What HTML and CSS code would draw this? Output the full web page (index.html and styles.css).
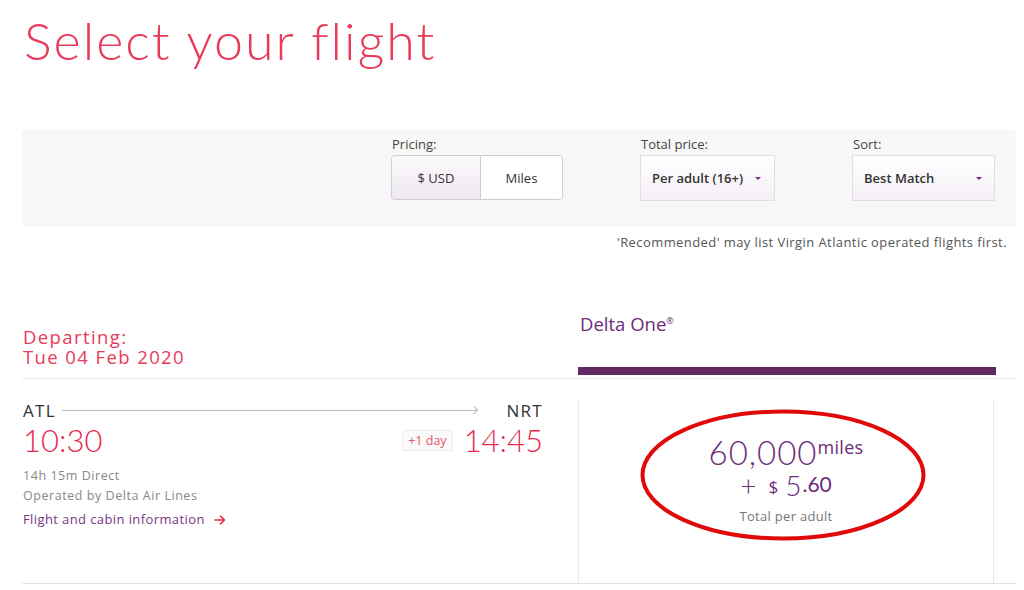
FILE: index.html
```html
<!DOCTYPE html>
<html lang="en">

<head>
    <meta charset="UTF-8">
    <title>Select your flight</title>
    <link rel="stylesheet" href="styles.css">
</head>

<body>
    <div class="page">
        <h1 class="page-title">Select your flight</h1>

        <div class="filters">
            <div class="filter">
                <label>Pricing:</label>
                <div class="toggle">
                    <button class="toggle-btn active">$ USD</button>
                    <button class="toggle-btn">Miles</button>
                </div>
            </div>
            <div class="filter">
                <label>Total price:</label>
                <div class="select select-price">Per adult (16+)<span class="caret"></span></div>
            </div>
            <div class="filter">
                <label>Sort:</label>
                <div class="select select-sort">Best Match<span class="caret"></span></div>
            </div>
        </div>
        <p class="note">'Recommended' may list Virgin Atlantic operated flights first.</p>

        <div class="flight-head">
            <div class="departing">
                <div>Departing:</div>
                <div>Tue 04 Feb 2020</div>
            </div>
            <div class="cabin-head">
                <div class="cabin-name">Delta One<sup>&reg;</sup></div>
                <div class="cabin-bar"></div>
            </div>
        </div>

        <div class="flight-row">
            <div class="flight-info">
                <div class="route">
                    <span class="airport">ATL</span>
                    <span class="route-line"></span>
                    <span class="airport">NRT</span>
                </div>
                <div class="times">
                    <span class="time">10:30</span>
                    <span class="spacer"></span>
                    <span class="plus-day">+1 day</span>
                    <span class="time">14:45</span>
                </div>
                <p class="meta">14h 15m Direct</p>
                <p class="meta">Operated by Delta Air Lines</p>
                <a class="info-link" href="#">Flight and cabin information
                    <svg class="arrow" width="12" height="10" viewBox="0 0 12 10">
                        <path d="M1 5H10.5M6.5 1L10.5 5L6.5 9" fill="none" stroke="#e5294f" stroke-width="1.6" stroke-linecap="round" stroke-linejoin="round"/>
                    </svg>
                </a>
            </div>
            <div class="fare">
                <div class="fare-miles">60,000<span class="miles-unit">miles</span></div>
                <div class="fare-cash"><span class="cash-plus">+</span><span class="cash-sign">$</span><span class="cash-big">5</span><span class="cash-cents">.60</span></div>
                <div class="fare-note">Total per adult</div>
                <svg class="circle-mark" width="286" height="132" viewBox="0 0 286 132">
                    <ellipse cx="143" cy="66" rx="140.5" ry="63.5" fill="none" stroke="#e00a0a" stroke-width="4"/>
                </svg>
            </div>
        </div>
    </div>
</body>

</html>
```

FILE: styles.css
```css
body {
    margin: 0;
    font-family: 'Open Sans', 'Liberation Sans', sans-serif;
    color: #333;
    background-color: #fff;
}

.page {
    width: 994px;
    padding-left: 22px;
}

.page-title {
    margin: 10px 0 0 2px;
    font-family: 'Lato', sans-serif;
    font-weight: 300;
    font-size: 52px;
    line-height: 60px;
    color: #e83a5a;
    letter-spacing: 2px;
}

/* filter panel */
.filters {
    margin-top: 60px;
    background-color: #f7f7f7;
    border-radius: 4px;
    display: flex;
    justify-content: flex-end;
    gap: 77px;
    padding: 6px 21px 26px 0;
}

.filter label {
    display: block;
    font-size: 13px;
    line-height: 16px;
    color: #444;
    margin-bottom: 3px;
    padding-left: 1px;
}

.toggle {
    display: flex;
    border: 1px solid #d3cad5;
    border-radius: 4px;
    overflow: hidden;
    height: 43px;
}

.toggle-btn {
    border: none;
    background: #fff;
    font-family: inherit;
    font-size: 13px;
    color: #333;
    width: 81px;
    padding: 0;
}

.toggle-btn.active {
    width: 89px;
    border-right: 1px solid #d3cad5;
    background: linear-gradient(#fbf9fb, #efe8f1);
}

.select {
    display: flex;
    align-items: center;
    height: 44px;
    padding-left: 11px;
    border: 1px solid #e2dee3;
    background: linear-gradient(#fff, #f4eff5);
    font-size: 13px;
    font-weight: 600;
    color: #333;
    position: relative;
    box-sizing: content-box;
}

.select-price {
    width: 122px;
}

.select-sort {
    width: 130px;
}

.caret {
    position: absolute;
    top: 21px;
    border-left: 3px solid transparent;
    border-right: 3px solid transparent;
    border-top: 3px solid #7a2a85;
}

.select-price .caret {
    right: 13px;
}

.select-sort .caret {
    right: 12px;
}

.note {
    margin: 7px 9px 0 0;
    text-align: right;
    font-size: 13px;
    letter-spacing: 0.42px;
    color: #555;
    line-height: 16px;
}

/* flight header */
.flight-head {
    margin-top: 60px;
    display: flex;
    align-items: flex-end;
    border-bottom: 1px solid #e8e8e8;
}

.departing {
    width: 555px;
    padding-left: 1px;
    font-size: 18.5px;
    letter-spacing: 1.4px;
    line-height: 19.5px;
    color: #e83a5a;
    padding-bottom: 12px;
}

.cabin-head {
    width: 418px;
}

.cabin-name {
    font-size: 18.5px;
    line-height: 22px;
    color: #6b2c78;
    padding-left: 2px;
}

.cabin-name sup {
    font-size: 9px;
}

.cabin-bar {
    margin-top: 32px;
    height: 8px;
    background-color: #632862;
    margin-bottom: 3px;
}

/* flight row */
.flight-row {
    display: flex;
    border-bottom: 1px solid #e4e4e4;
    height: 204px;
}

.flight-info {
    width: 521px;
    padding-top: 21px;
    margin-right: 35px;
}

.route {
    display: flex;
    align-items: center;
    height: 20px;
}

.airport {
    font-size: 17px;
    letter-spacing: 1.3px;
    color: #333;
    padding-left: 1px;
}

.route-line {
    flex: 1;
    height: 1px;
    background-color: #bbb;
    margin: 0 28px 0 6px;
    position: relative;
}

.route-line::after {
    content: "";
    position: absolute;
    right: 0;
    top: -3px;
    width: 5px;
    height: 5px;
    border-top: 1px solid #bbb;
    border-right: 1px solid #bbb;
    transform: rotate(45deg);
}

.times {
    display: flex;
    align-items: center;
    height: 36px;
    margin-top: 2px;
}

.time {
    font-family: 'Lato', sans-serif;
    font-weight: 300;
    font-size: 31px;
    color: #e5294f;
    padding-left: 1px;
}

.spacer {
    flex: 1;
}

.plus-day {
    font-size: 12.5px;
    color: #e5546e;
    border: 1px solid #ececec;
    background-color: #fafafa;
    border-radius: 2px;
    padding: 1px 5px;
    margin-right: 10px;
    line-height: 17px;
}

.meta {
    margin: 0;
    padding-left: 1px;
    font-size: 12.5px;
    letter-spacing: 0.55px;
    line-height: 19.5px;
    color: #888;
}

.times + .meta {
    margin-top: 8px;
}

.info-link {
    display: inline-block;
    margin-top: 5px;
    padding-left: 1px;
    font-size: 13px;
    letter-spacing: 0.4px;
    color: #7a3486;
    text-decoration: none;
}

.arrow {
    margin-left: 5px;
    vertical-align: -1px;
}

.fare {
    position: relative;
    width: 416px;
    margin-top: 21px;
    border-left: 1px solid #e8e8e8;
    border-right: 1px solid #e8e8e8;
    text-align: center;
    color: #6b2c78;
    padding-top: 36px;
    box-sizing: border-box;
    height: 183px;
}

.fare-miles {
    font-family: 'Lato', sans-serif;
    font-weight: 300;
    font-size: 33px;
    letter-spacing: 1px;
    line-height: 32px;
}

.miles-unit {
    font-family: 'Open Sans', sans-serif;
    font-weight: 400;
    font-size: 18px;
    letter-spacing: 0.3px;
    vertical-align: 11px;
    line-height: 18px;
}

.fare-cash {
    display: flex;
    justify-content: center;
    align-items: baseline;
    font-family: 'Lato', sans-serif;
    line-height: 22px;
    height: 22px;
    margin-top: 6px;
}

.cash-plus {
    font-weight: 300;
    font-size: 28px;
    margin-right: 12px;
}

.cash-sign {
    font-family: 'Open Sans', sans-serif;
    font-size: 17px;
    margin-right: 7px;
    position: relative;
    top: -3px;
}

.cash-big {
    font-weight: 300;
    font-size: 28px;
}

.cash-cents {
    font-weight: 400;
    font-size: 21px;
    position: relative;
    top: -4px;
    margin-left: 1px;
}

.fare-note {
    font-size: 13px;
    letter-spacing: 0.3px;
    color: #777;
    line-height: 16px;
    margin-top: 12px;
}

.circle-mark {
    position: absolute;
    left: 61px;
    top: 9px;
}
```
